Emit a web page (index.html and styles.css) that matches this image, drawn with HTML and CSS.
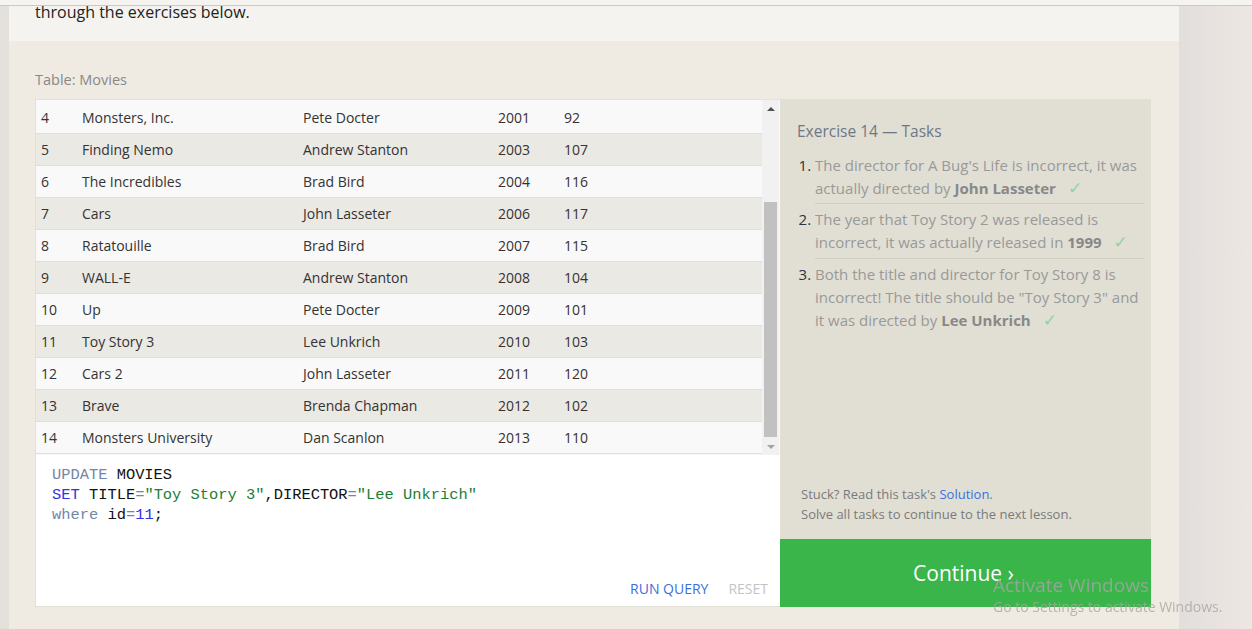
FILE: index.html
```html
<!DOCTYPE html>
<html lang="en">
<head>
<meta charset="utf-8">
<title>SQL Lesson 14</title>
<link rel="stylesheet" href="styles.css">
</head>
<body>
<div class="topbar"></div>
<div class="page">
  <div class="gutter-left"></div>
  <main class="card">
    <section class="intro"><p>through the exercises below.</p></section>
    <section class="exercise">
      <div class="table-label">Table: Movies</div>
      <div class="workspace">
        <div class="left-col">
          <div class="table-box">
            <div class="rows">
              <div class="row"><span>4</span><span>Monsters, Inc.</span><span>Pete Docter</span><span>2001</span><span>92</span></div>
              <div class="row"><span>5</span><span>Finding Nemo</span><span>Andrew Stanton</span><span>2003</span><span>107</span></div>
              <div class="row"><span>6</span><span>The Incredibles</span><span>Brad Bird</span><span>2004</span><span>116</span></div>
              <div class="row"><span>7</span><span>Cars</span><span>John Lasseter</span><span>2006</span><span>117</span></div>
              <div class="row"><span>8</span><span>Ratatouille</span><span>Brad Bird</span><span>2007</span><span>115</span></div>
              <div class="row"><span>9</span><span>WALL-E</span><span>Andrew Stanton</span><span>2008</span><span>104</span></div>
              <div class="row"><span>10</span><span>Up</span><span>Pete Docter</span><span>2009</span><span>101</span></div>
              <div class="row"><span>11</span><span>Toy Story 3</span><span>Lee Unkrich</span><span>2010</span><span>103</span></div>
              <div class="row"><span>12</span><span>Cars 2</span><span>John Lasseter</span><span>2011</span><span>120</span></div>
              <div class="row"><span>13</span><span>Brave</span><span>Brenda Chapman</span><span>2012</span><span>102</span></div>
              <div class="row"><span>14</span><span>Monsters University</span><span>Dan Scanlon</span><span>2013</span><span>110</span></div>
            </div>
            <div class="scrollbar">
              <div class="arrow up"></div>
              <div class="track"><div class="thumb"></div></div>
              <div class="arrow down"></div>
            </div>
          </div>
          <div class="editor">
<pre class="code"><span class="kw">UPDATE</span> MOVIES
<span class="kw2">SET</span> TITLE<span class="op">=</span><span class="str">"Toy Story 3"</span>,DIRECTOR<span class="op">=</span><span class="str">"Lee Unkrich"</span>
<span class="kw">where</span> id<span class="op">=</span><span class="num">11</span>;</pre>
            <div class="actions"><span class="run">RUN QUERY</span><span class="reset">RESET</span></div>
          </div>
        </div>
        <div class="right-col">
          <div class="tasks">
            <h3 class="tasks-title">Exercise 14 — Tasks</h3>
            <ol class="task-list">
              <li>The director for A Bug's Life is incorrect, it was<br>actually directed by <b>John Lasseter</b><span class="check">✓</span></li>
              <li>The year that Toy Story 2 was released is<br>incorrect, it was actually released in <b>1999</b><span class="check">✓</span></li>
              <li>Both the title and director for Toy Story 8 is<br>incorrect! The title should be "Toy Story 3" and<br>it was directed by <b>Lee Unkrich</b><span class="check">✓</span></li>
            </ol>
            <div class="stuck">
              <div>Stuck? Read this task's <span class="link">Solution</span>.</div>
              <div>Solve all tasks to continue to the next lesson.</div>
            </div>
          </div>
          <div class="continue">Continue ›</div>
        </div>
      </div>
    </section>
  </main>
  <div class="gutter-right"></div>
</div>
<div class="watermark">
  <div class="wm-title">Activate Windows</div>
  <div class="wm-sub">Go to Settings to activate Windows.</div>
</div>
</body>
</html>
```

FILE: styles.css
```css
html, body {
  margin: 0;
  padding: 0;
}
body {
  width: 1252px;
  height: 629px;
  overflow: hidden;
  background: #efebe3;
  font-family: "Open Sans", "Noto Sans", sans-serif;
  color: #333;
}
.topbar {
  position: fixed;
  top: 0;
  left: 0;
  right: 0;
  height: 5px;
  background: #f5f4f0;
  border-bottom: 1px solid #c9c9c7;
  z-index: 5;
}
.page {
  display: flex;
  height: 629px;
}
.gutter-left {
  width: 9px;
  flex: none;
  background: #e4e0dc;
}
.gutter-right {
  flex: 1;
  background: linear-gradient(to right, #e2dedb, #ede7e3);
}
.card {
  width: 1170px;
  flex: none;
  display: flex;
  flex-direction: column;
  background: #efebe3;
}
.intro {
  height: 41px;
  background: #f5f3ef;
  padding-left: 26px;
  overflow: hidden;
}
.intro p {
  margin: 0;
  font-size: 16px;
  line-height: 24px;
  color: #222;
}
.exercise {
  padding-left: 26px;
  flex: 1;
}
.table-label {
  margin-top: 29px;
  font-size: 14.5px;
  line-height: 20px;
  color: #888;
}
.workspace {
  margin-top: 9px;
  width: 1116px;
  height: 508px;
  display: flex;
}
.left-col {
  width: 744px;
  flex: none;
  border-left: 1px solid #e2dfd6;
  display: flex;
  flex-direction: column;
}
.table-box {
  display: flex;
  height: 355px;
  flex: none;
  border-top: 1px solid #e4e2da;
  background: #f9f9f9;
}
.rows {
  width: 726px;
  padding-top: 2px;
  overflow: hidden;
}
.row {
  display: grid;
  grid-template-columns: 46px 221px 195px 66px 1fr;
  height: 31px;
  align-items: center;
  border-bottom: 1px solid #e0ded6;
  font-size: 14px;
  color: #333;
  background: #f9f9f9;
}
.row span:first-child {
  padding-left: 5px;
}
.row:nth-child(even) {
  background: #ebe9e3;
}
.scrollbar {
  width: 17px;
  flex: none;
  background: #f1f1f1;
  display: flex;
  flex-direction: column;
}
.arrow {
  height: 17px;
  display: flex;
  align-items: center;
  justify-content: center;
}
.arrow.up::before {
  content: "";
  border-left: 4px solid transparent;
  border-right: 4px solid transparent;
  border-bottom: 4px solid #505050;
}
.arrow.down::before {
  content: "";
  border-left: 4px solid transparent;
  border-right: 4px solid transparent;
  border-top: 4px solid #a3a3a3;
}
.track {
  flex: 1;
  padding-top: 85px;
}
.thumb {
  margin-left: 2px;
  width: 13px;
  height: 235px;
  background: #c1c1c1;
}
.editor {
  flex: 1;
  background: #fff;
  border-bottom: 1px solid #e2e0d6;
  display: flex;
  flex-direction: column;
}
.code {
  margin: 0;
  padding: 10px 0 0 16px;
  font-family: "Liberation Mono", "DejaVu Sans Mono", monospace;
  font-size: 15.4px;
  line-height: 20px;
  color: #111;
}
.kw { color: #7486a8; }
.kw2 { color: #3131e6; }
.op { color: #7486a8; }
.str { color: #1c7d38; }
.num { color: #3131e6; }
.actions {
  margin-top: auto;
  display: flex;
  justify-content: flex-end;
  gap: 20px;
  padding: 0 12px 7px 0;
  font-size: 14px;
  line-height: 20px;
}
.run { color: #3a6fe0; }
.reset { color: #c4c4c4; }
.right-col {
  width: 371px;
  flex: none;
  display: flex;
  flex-direction: column;
}
.tasks {
  flex: 1;
  background: #e1dfd4;
  padding: 21px 7px 15px 17px;
  display: flex;
  flex-direction: column;
}
.tasks-title {
  margin: 0;
  font-weight: normal;
  font-size: 15.5px;
  line-height: 22px;
  color: #6d7787;
}
.task-list {
  margin: 12px 0 0 0;
  padding-left: 18px;
  font-size: 15px;
  line-height: 23px;
  color: #999;
}
.task-list li {
  padding: 4px 0 3px 0;
  border-bottom: 1px solid #d0cdc2;
  white-space: nowrap;
}
.task-list li:first-child {
  padding-top: 0;
}
.task-list li:nth-child(2) {
  padding-bottom: 4px;
}
.task-list li:last-child {
  border-bottom: none;
}
.task-list li::marker {
  color: #2d3340;
}
.task-list b {
  color: #888;
}
.check {
  margin-left: 12px;
  color: #8fd4a0;
  font-family: "DejaVu Sans", sans-serif;
  font-size: 17px;
  line-height: 20px;
}
.stuck {
  margin-top: auto;
  padding-left: 4px;
  font-size: 13px;
  line-height: 20px;
  color: #7a7a7a;
}
.link { color: #3a6fe0; }
.continue {
  height: 68px;
  flex: none;
  background: #3ab54a;
  color: #fff;
  font-size: 21px;
  line-height: 68px;
  text-align: center;
  padding-right: 4px;
}
.watermark {
  position: fixed;
  left: 993px;
  top: 573px;
  color: rgba(165, 165, 165, 0.8);
  z-index: 10;
}
.wm-title {
  font-size: 19px;
  line-height: 24px;
}
.wm-sub {
  margin-top: 1px;
  font-size: 14px;
  line-height: 18px;
}
```
